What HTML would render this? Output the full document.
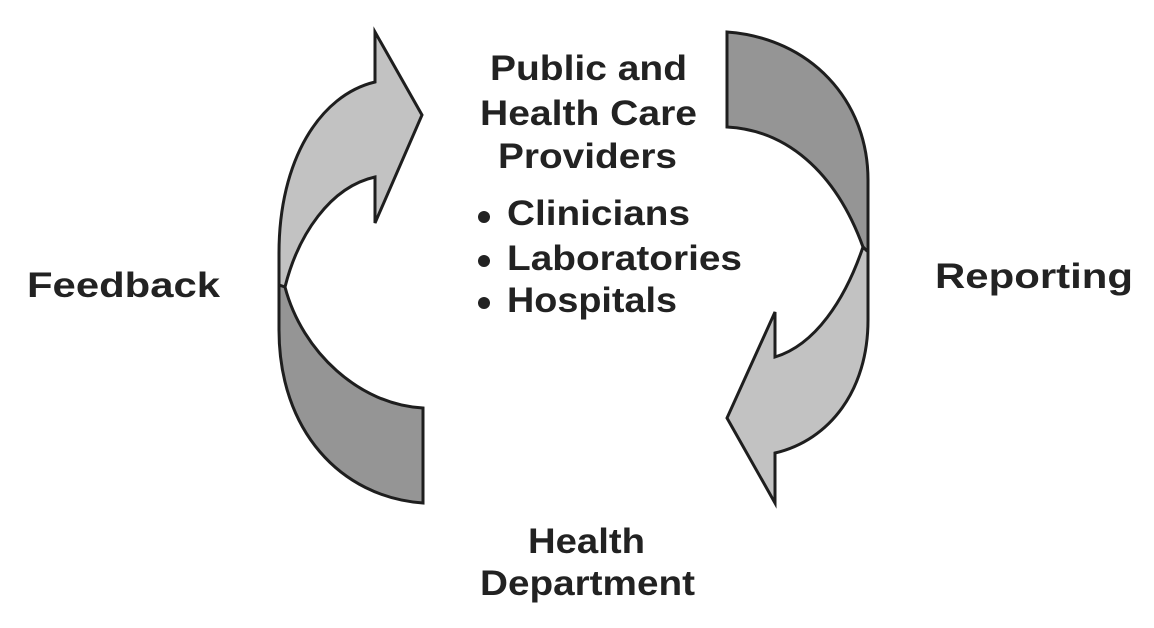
<!DOCTYPE html>
<html><head><style>html,body{margin:0;padding:0;background:#fff;}svg{display:block}</style></head>
<body>
<svg width="1154" height="628" viewBox="0 0 1154 628" xmlns="http://www.w3.org/2000/svg">
<g stroke="#1e1e1e" stroke-width="3" stroke-linejoin="miter">
<path d="M279,290 L279,253 C279,160 320,95 375,82 L375,32 L422,115 L375,223 L375,177 C330,187 298,235 285,287 Z" fill="#c2c2c2"/>
<path d="M285,287 C302,352 360,405 423,408 L423,503 C340,497 279,430 279,330 L279,285 Z" fill="#959595"/>
<path d="M727,32 C810,38 868,100 868,180 L868,252 L863,247 C835,170 785,130 727,127 Z" fill="#959595"/>
<path d="M863,247 C845,300 815,345 775,357 L775,312 L727,418 L775,503 L775,453 C830,440 868,390 868,320 L868,252 Z" fill="#c2c2c2"/>
</g>
<g font-family="Liberation Sans, Arial, sans-serif" font-weight="bold" font-size="35" fill="#222">
<text x="490" y="80" textLength="197" lengthAdjust="spacingAndGlyphs">Public and</text>
<text x="480" y="125" textLength="217" lengthAdjust="spacingAndGlyphs">Health Care</text>
<text x="498" y="168" textLength="179" lengthAdjust="spacingAndGlyphs">Providers</text>
<text x="507" y="225" textLength="183" lengthAdjust="spacingAndGlyphs">Clinicians</text>
<text x="507" y="270" textLength="235" lengthAdjust="spacingAndGlyphs">Laboratories</text>
<text x="507" y="312" textLength="170" lengthAdjust="spacingAndGlyphs">Hospitals</text>
<text x="27" y="297" textLength="193" lengthAdjust="spacingAndGlyphs">Feedback</text>
<text x="935" y="288" textLength="198" lengthAdjust="spacingAndGlyphs">Reporting</text>
<text x="528" y="553" textLength="117" lengthAdjust="spacingAndGlyphs">Health</text>
<text x="480" y="595" textLength="215" lengthAdjust="spacingAndGlyphs">Department</text>
</g>
<g fill="#222">
<circle cx="484" cy="217" r="6"/>
<circle cx="484" cy="261" r="6"/>
<circle cx="484" cy="303" r="6"/>
</g>
</svg>
</body></html>
